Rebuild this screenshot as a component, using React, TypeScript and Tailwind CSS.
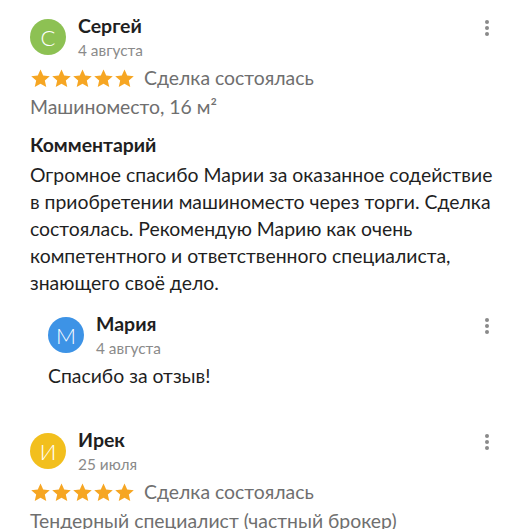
import React from 'react';

type Person = {
    name: string;
    date: string;
    letter: string;
    color: string;
};

function Star() {
    return (
        <svg width="21" height="21" viewBox="0 0 24 24" className="shrink-0">
            <path
                fill="#f6a623"
                d="M12 1.8l3.09 6.9 7.51.72-5.66 5 1.64 7.38L12 17.98l-6.58 3.82 1.64-7.38-5.66-5 7.51-.72z"
            />
        </svg>
    );
}

function Stars() {
    return (
        <div className="flex items-center gap-[0px]">
            <Star />
            <Star />
            <Star />
            <Star />
            <Star />
        </div>
    );
}

function MoreButton() {
    return (
        <button className="w-6 h-6 flex flex-col items-center justify-center gap-[2px] mt-[2px] shrink-0">
            <span className="w-[4px] h-[4px] rounded-full bg-[#8a8a8a]" />
            <span className="w-[4px] h-[4px] rounded-full bg-[#8a8a8a]" />
            <span className="w-[4px] h-[4px] rounded-full bg-[#8a8a8a]" />
        </button>
    );
}

function AuthorHeader({ person }: { person: Person }) {
    return (
        <div className="flex items-start justify-between">
            <div className="flex items-center gap-3">
                <div
                    className={`w-9 h-9 rounded-full flex items-center justify-center text-white text-[22px] font-light ${person.color}`}
                >
                    {person.letter}
                </div>
                <div className="flex flex-col">
                    <span className="text-[19.5px] leading-6 font-bold text-[#1f1f1f]">{person.name}</span>
                    <span className="text-[15.4px] leading-5 mt-[2px] text-[#8a8a8a]">{person.date}</span>
                </div>
            </div>
            <MoreButton />
        </div>
    );
}

function Rating({ status }: { status: string }) {
    return (
        <div className="flex items-center gap-[9px] mt-[6px]">
            <Stars />
            <span className="text-[19.4px] leading-6 text-[#6f6f6f]">{status}</span>
        </div>
    );
}

export default function App() {
    const sergey: Person = { name: 'Сергей', date: '4 августа', letter: 'С', color: 'bg-[#8dc153]' };
    const maria: Person = { name: 'Мария', date: '4 августа', letter: 'М', color: 'bg-[#3d93e6]' };
    const irek: Person = { name: 'Ирек', date: '25 июля', letter: 'И', color: 'bg-[#f2bf1d]' };

    return (
        <div
            className="w-[529px] h-[529px] overflow-hidden bg-white px-[30px] pt-[14px] text-[#1f1f1f]"
            style={{ fontFamily: 'Lato, "Noto Sans", sans-serif' }}
        >
            {/* First review */}
            <div>
                <AuthorHeader person={sergey} />
                <Rating status="Сделка состоялась" />
                <p className="text-[19.4px] leading-6 mt-[5px] text-[#6f6f6f]">Машиноместо, 16 м²</p>
                <h4 className="text-[19.4px] leading-6 font-bold mt-[14px]">Комментарий</h4>
                <p className="text-[19.4px] leading-[27px] mt-[4px]">
                    Огромное спасибо Марии за оказанное содействие в приобретении машиноместо через торги. Сделка
                    состоялась. Рекомендую Марию как очень компетентного и ответственного специалиста, знающего своё
                    дело.
                </p>

                {/* Reply */}
                <div className="ml-[18px] mt-[16px]">
                    <AuthorHeader person={maria} />
                    <p className="text-[19.4px] leading-6 mt-[6px]">Спасибо за отзыв!</p>
                </div>
            </div>

            {/* Second review */}
            <div className="mt-[40px]">
                <AuthorHeader person={irek} />
                <Rating status="Сделка состоялась" />
                <p className="text-[19.4px] leading-6 mt-[5px] text-[#6f6f6f]">Тендерный специалист (частный брокер)</p>
            </div>
        </div>
    );
}
